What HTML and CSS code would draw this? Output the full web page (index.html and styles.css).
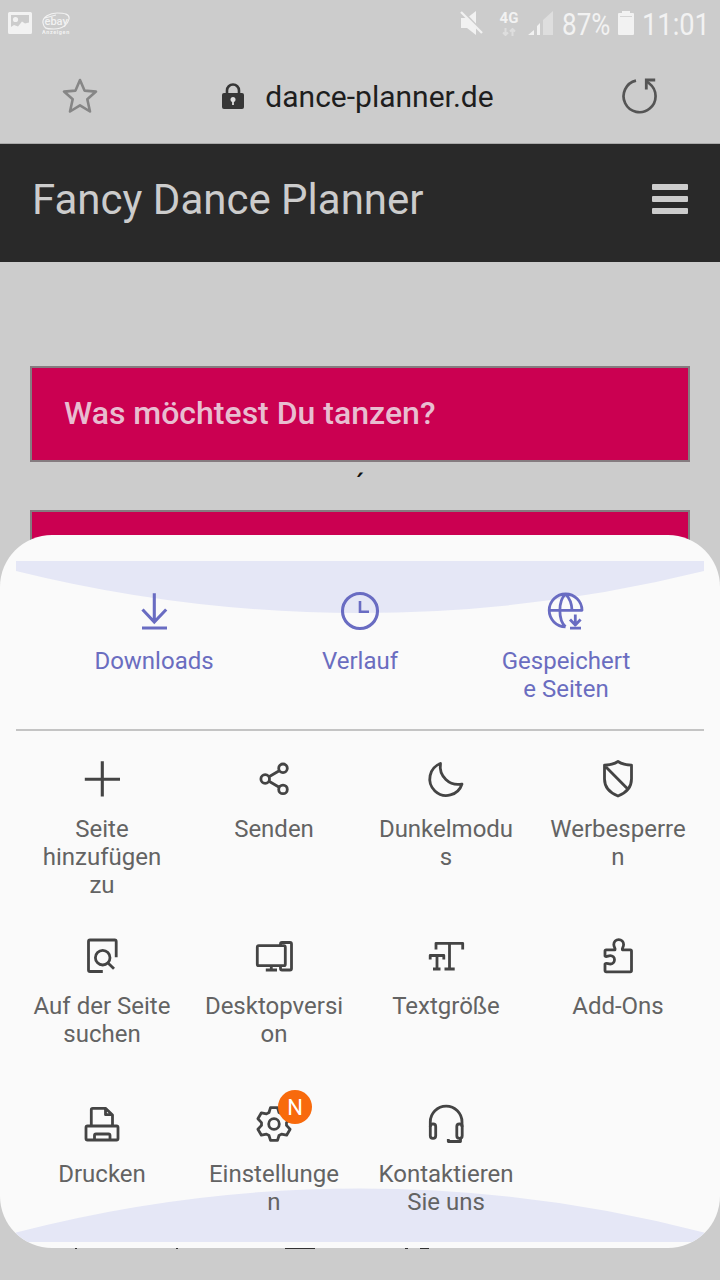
FILE: index.html
```html
<!DOCTYPE html>
<html lang="de">
<head>
<meta charset="utf-8">
<title>Fancy Dance Planner</title>
<link rel="stylesheet" href="styles.css">
</head>
<body>
<div class="screen">
  <div class="status">
    <svg class="status-picture" width="24" height="22" viewBox="0 0 24 22"><path fill="#f2f2f2" fill-rule="evenodd" d="M1.5 0h21Q24 0 24 1.5v19Q24 22 22.5 22h-21Q0 22 0 20.500v-19Q0 0 1.500 0zM3 3v12l3-2 4 1.500 4-5 3 2 4-1V3z"/><circle cx="7.500" cy="7.500" r="2.600" fill="#f2f2f2"/></svg>
    <svg class="status-ebay" width="30" height="24" viewBox="0 0 30 24"><path d="M1 11C0 5 8 1 15 1S28 2 27 7 21 17 12 17 2 16 1 11zM3 6L14 3" fill="none" stroke="#f2f2f2" stroke-width="1.200"/><text class="ebay-name" x="2.500" y="12.500">ebay</text><text class="ebay-sub" x="0" y="22">Anzeigen</text></svg>
    <div class="status-right">
      <svg width="24" height="26" viewBox="0 0 24 26"><path fill="#f2f2f2" d="M1 8h6l9-7v24l-9-7H1z"/><path d="M1 0L23 23" stroke="#ccc" stroke-width="3"/><path d="M1 2L22 23" stroke="#f2f2f2" stroke-width="2.300"/></svg>
      <div class="network"><span>4G</span><svg width="14" height="8" viewBox="0 0 14 8"><path d="M3.500 0v7M1 4.500L3.500 7 6 4.500M10.500 8V1M8 3.500L10.500 1 13 3.500" fill="none" stroke="#dedede" stroke-width="2"/></svg></div>
      <svg class="signal" width="25" height="24" viewBox="0 0 25 24"><path fill="#dedede" d="M15 9l10-9v24H15z"/><path fill="#f2f2f2" d="M0 24l6-5v5zM9 15l3-3v12H9z"/></svg>
      <span class="percent">87%</span>
      <svg class="battery" width="16" height="24" viewBox="0 0 16 24"><path fill="#f2f2f2" d="M4 0h8v2h3q1 0 1 1v20q0 1-1 1H1q-1 0-1-1V3q0-1 1-1h3z"/><path d="M2 5.500h12" stroke="#d5d5d5"/></svg>
      <span class="clock">11:01</span>
    </div>
  </div>
  <div class="toolbar">
    <svg class="star" width="36" height="36" viewBox="0 0 36 36"><path d="M18 2l4.500 10.600 11.500 1-8.700 7.600L28 33.500l-10-6.200-10 6.200 2.700-12.300L2 13.600l11.500-1z" fill="none" stroke="#868686" stroke-width="2.600" stroke-linejoin="round"/></svg>
    <div class="address">
      <svg width="22" height="27" viewBox="0 0 22 27"><rect y="10" width="22" height="16" rx="2" fill="#363636"/><path d="M5 11V7.500a6 6 0 0 1 12 0V11" fill="none" stroke="#363636" stroke-width="2.600"/><circle cx="11" cy="16.500" r="2.500" fill="#ddd"/><path d="M11 17v5" stroke="#ddd" stroke-width="1.800"/></svg>
      <span>dance-planner.de</span>
    </div>
    <svg class="reload" width="36" height="36" viewBox="0 0 36 36"><path d="M14 2.600A16 16 0 1 0 27.300 5.500L24.500 3.300" fill="none" stroke="#555" stroke-width="2.700"/><path d="M33.200 2H24.300V11.500" fill="none" stroke="#555" stroke-width="2.800"/></svg>
  </div>
  <div class="site-header">
    <span>Fancy Dance Planner</span>
    <div class="burger"><i></i><i></i><i></i></div>
  </div>
  <div class="site-body">
    <div class="choice">Was möchtest Du tanzen?</div>
    <div class="accent">´</div>
    <div class="choice"></div>
  </div>
  <svg class="hidden-line" width="372" height="2" viewBox="0 0 372 2"><path d="M15 .4h2M116 .4h2M225 .5h30M345 .5h3M360 .5h9" stroke="#333" stroke-width="1.200"/></svg>

  <div class="sheet">
    <svg class="waves" width="720" height="713" viewBox="0 0 720 713"><path fill="#e5e7f6" d="M16 26H704V36A1430 1430 0 0 1 16 36zM16 697.500A1367 1367 0 0 1 704 697.500V707H16z"/></svg>
    <div class="top-row">
      <div class="item"><svg class="icon" viewBox="0 0 40 40"><path d="M20.300 2.300V31M8.500 18.500L20.300 31 32.200 18.500M8 37H33"/></svg><span>Downloads</span></div>
      <div class="item"><svg class="icon" viewBox="0 0 40 40"><circle cx="20" cy="20" r="17.500"/><path stroke-width="2.600" d="M20 10V20.700H29"/></svg><span>Verlauf</span></div>
      <div class="item"><svg class="icon thin" viewBox="0 0 40 40"><path d="M3.300 19.300H36A16.400 16.400 0 1 0 19.500 35.800M19.500 3C12 10 12 29 19.500 35.800M19.500 3Q25.600 9 26 19.300"/><path d="M29.300 23.500V34M24 28.500L29.300 34 34.600 28.500M24 37.200H35"/></svg><span>Gespeichert<br>e Seiten</span></div>
    </div>
    <div class="grid">
      <div class="item"><svg class="icon" viewBox="0 0 40 40"><path d="M20.300 2.300V37.600M2.800 20.200H38"/></svg><span>Seite<br>hinzufügen<br>zu</span></div>
      <div class="item"><svg class="icon thin" viewBox="0 0 40 40"><circle cx="11.200" cy="20" r="4.300"/><circle cx="29" cy="9.300" r="4.300"/><circle cx="29" cy="30.400" r="4.300"/><path d="M15 17.800L25.200 11.700M15 22.300L25.200 28.200"/></svg><span>Senden</span></div>
      <div class="item"><svg class="icon thin" viewBox="0 0 40 40"><path d="M14.500 4.500A16.500 16.500 0 1 0 36 25A18 18 0 0 1 14.500 4.500z"/></svg><span>Dunkelmodu<br>s</span></div>
      <div class="item"><svg class="icon thin" viewBox="0 0 40 40"><path d="M20 2.500Q14.500 6 6.500 6.200V20C6.500 28 11 33.500 20 37 29 33.500 33.500 28 33.500 20V6.200Q25.500 6 20 2.500zM7 7L30 30.300"/></svg><span>Werbesperre<br>n</span></div>
      <div class="item"><svg class="icon thin" viewBox="0 0 40 40"><path d="M34.200 21.200V5.500Q34.200 4 32.700 4H8Q6.500 4 6.500 5.500V34Q6.500 35.500 8 35.500H20.800"/><circle cx="20.700" cy="21.700" r="7.300"/><path d="M26 27L32 32.700"/></svg><span>Auf der Seite<br>suchen</span></div>
      <div class="item"><svg class="icon thin" viewBox="0 0 40 40"><rect x="3.300" y="9.700" width="28" height="20" rx="1.500"/><path d="M11.800 34H23M17.300 29.500V34M26.500 9.500V8Q26.500 6.500 28 6.500H36Q37.500 6.500 37.500 8V32.500Q37.500 34 36 34H28Q26.500 34 26.500 32.500V30"/></svg><span>Desktopversi<br>on</span></div>
      <div class="item"><svg class="icon thin" viewBox="0 0 40 40"><path d="M10 13.500V7.300H36.700V13.500M23.500 7.300V33M18.500 33H28.700M4.200 23.500V19.500H17.800V23.500M11 19.500V33M7 33H14.500"/></svg><span>Textgröße</span></div>
      <div class="item"><svg class="icon thin" viewBox="0 0 40 40"><path d="M7 20V15Q7 13.800 8.200 13.800H17C17.700 12 15.800 11.500 15.800 8.500A4.900 4.900 0 0 1 25.600 8.500C25.600 11.500 23.700 12 24.400 13.800H32.300Q33.500 13.800 33.500 15V34.600Q33.500 35.800 32.300 35.800H8.200Q7 35.800 7 34.600V28C8.500 26.500 10 28 12.300 28A4.200 4.200 0 0 0 12.300 19.600C10 19.600 8.500 21.500 7 20z"/></svg><span>Add-Ons</span></div>
      <div class="item"><svg class="icon thin" viewBox="0 0 40 40"><rect x="4" y="22" width="32" height="14" rx="1.500"/><path d="M9.300 22V5.700Q9.300 4.300 10.700 4.300H23.500L30.500 11V22M23.500 4.300V10.700H30.500M12.500 36V31.500Q12.500 30 14 30H26.500Q28 30 28 31.500V36"/></svg><span>Drucken</span></div>
      <div class="item"><svg class="icon thin" viewBox="0 0 40 40"><g transform="translate(20 20)"><path d="M-5-11.500L-3.500-16.400H3.500L5-11.500 7.500-10.100 12.600-11.200 16.100-5.200 12.500-1.400V1.400L16.100 5.200 12.600 11.200 7.500 10.100 5 11.500 3.500 16.400H-3.500L-5 11.500-7.500 10.100-12.600 11.200-16.100 5.200-12.500 1.400V-1.400L-16.100-5.200-12.600-11.200-7.500-10.100z"/><circle r="5.300"/></g></svg><b class="badge">N</b><span>Einstellunge<br>n</span></div>
      <div class="item"><svg class="icon thin" viewBox="0 0 40 40"><path d="M4.300 23V18A15.800 15.800 0 0 1 36 18V23M34.500 34V37.500H22.300V35"/><rect x="4.300" y="20" width="5.400" height="14.300" rx="2.500"/><rect x="30.800" y="20" width="5.400" height="14.300" rx="2.500"/></svg><span>Kontaktieren<br>Sie uns</span></div>
    </div>
  </div>
</div>
</body>
</html>
```
FILE: styles.css
```css
body { margin: 0; font-family: Roboto, "Liberation Sans", sans-serif; }
svg { display: block; flex: none; }
.screen { position: relative; width: 720px; height: 1280px; overflow: hidden; background: #ccc; }

.status { display: flex; height: 48px; box-sizing: border-box; padding: 12px 0 0 8px; color: #f2f2f2; }
.status-ebay { margin: 0 0 0 10px; }
.ebay-name { font-size: 11px; font-weight: 500; fill: #f2f2f2; }
.ebay-sub { font-size: 5.5px; font-weight: 700; letter-spacing: .6px; fill: #f2f2f2; }
.status-right { display: flex; margin-left: auto; margin-top: -2px; padding-right: 11px; font-size: 31px; line-height: 29px; }
.network { display: flex; flex-direction: column; align-items: center; width: 20px; margin-left: 15px; font-size: 15px; font-weight: 700; line-height: 17px; gap: 1px; }
.signal { margin: 1px 9px 0 9px; }
.percent { width: 48px; transform: scaleX(.84); transform-origin: 0 0; white-space: nowrap; }
.battery { margin: 1px 0 0 8px; }
.clock { width: 67px; margin-left: 8px; transform: scaleX(.88); transform-origin: 0 0; white-space: nowrap; }

.toolbar { display: flex; align-items: center; justify-content: space-between; height: 96px; box-sizing: border-box; padding: 0 62px; border-bottom: 1px solid #aaa; }
.star, .reload { margin-top: 1px; }
.address { display: flex; align-items: center; gap: 21px; margin: 2px 0 0 -4px; font-size: 30px; color: #1e1e1e; }

.site-header { display: flex; align-items: center; justify-content: space-between; height: 118px; box-sizing: border-box; padding: 0 32px; background: #292929; color: #ccc; font-size: 42px; }
.site-header span { margin-top: -8px; }
.burger { display: flex; flex-direction: column; gap: 6px; width: 36px; margin-top: -8px; }
.burger i { height: 6px; border-radius: 1px; background: #ccc; }

.site-body { padding: 104px 30px 0; }
.choice { height: 96px; box-sizing: border-box; padding: 0 32px; border: 2px solid #857c80; background: #cb0051; color: #e8bdd0; font-size: 32px; font-weight: 500; line-height: 91px; }
.accent { height: 48px; line-height: 46px; font-size: 30px; text-align: center; color: #111; }
.hidden-line { position: absolute; left: 60px; top: 1248px; }

.sheet { position: absolute; left: 0; top: 535px; width: 720px; height: 713px; box-sizing: border-box; padding: 0 16px; border-radius: 52px; overflow: hidden; background: #fafafa; color: #636363; font-size: 24px; line-height: 28px; }
.waves { position: absolute; left: 0; top: 0; }
.top-row { position: relative; display: grid; grid-template-columns: repeat(3, 206px); justify-content: center; height: 196px; box-sizing: border-box; padding-top: 56px; border-bottom: 2px solid #c4c4c4; color: #6a6dc0; }
.grid { position: relative; display: grid; grid-template-columns: repeat(4, 172px); grid-template-rows: 177px 168px 112px; padding-top: 28px; }
.item { position: relative; display: flex; flex-direction: column; align-items: center; gap: 16px; text-align: center; }
.icon { width: 40px; height: 40px; fill: none; stroke: #444; stroke-width: 3.1; }
.thin { stroke-width: 2.8; stroke-linejoin: round; }
.top-row .icon { stroke: #696cc2; }
.badge { position: absolute; left: 90px; top: -14px; width: 34px; height: 34px; border-radius: 50%; background: #f86a0c; color: #fff; font-size: 22px; font-weight: 400; line-height: 36px; }
```
